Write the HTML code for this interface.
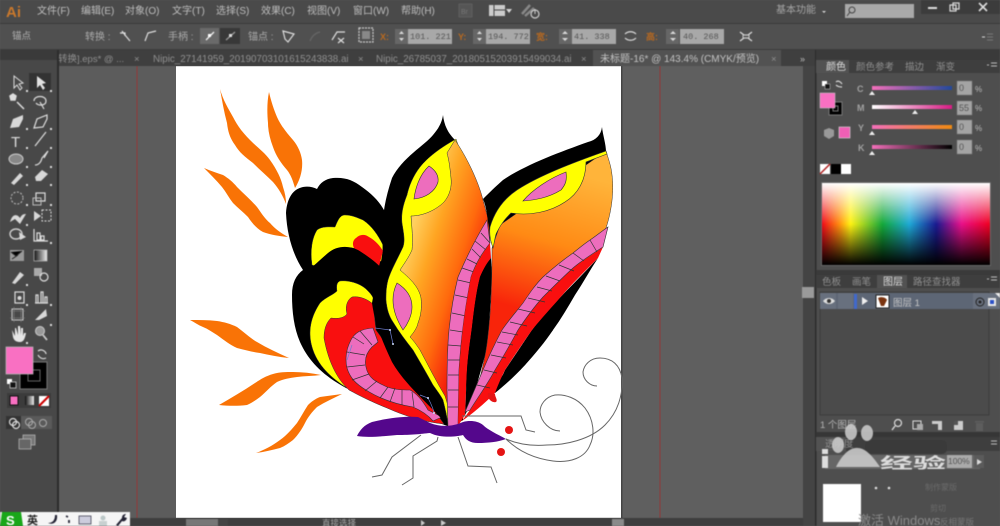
<!DOCTYPE html>
<html><head><meta charset="utf-8"><style>
html,body{margin:0;padding:0;width:1000px;height:526px;overflow:hidden;background:#535353}
svg{display:block}
text{font-family:"Liberation Sans","Noto Sans CJK SC",sans-serif}
.ui{filter:blur(.6px)}
.art{filter:blur(.25px)}
.m{font-size:10px;fill:#bdbdbd}
.t{font-size:10px;fill:#a8a8a8}
.d{font-size:9.5px;fill:#8f8f8f}
.v{font-size:8.5px;fill:#555;font-family:"Liberation Mono",monospace}
.o{font-size:9px;font-weight:bold;fill:#b9691f}
.i{fill:none;stroke:#ddd;stroke-width:1.2}
.f{fill:#d8d8d8}
</style></head><body>
<svg width="1000" height="526" viewBox="0 0 1000 526" xmlns="http://www.w3.org/2000/svg">
<defs>
<linearGradient id="lw" gradientUnits="userSpaceOnUse" x1="405" y1="250" x2="482" y2="275"><stop offset="0" stop-color="#ffd060"/><stop offset=".3" stop-color="#ffa522"/><stop offset=".68" stop-color="#ff6a0d"/><stop offset="1" stop-color="#f5200a"/></linearGradient>
<linearGradient id="rw" gradientUnits="userSpaceOnUse" x1="565" y1="170" x2="525" y2="310"><stop offset="0" stop-color="#ffb43a"/><stop offset=".5" stop-color="#ff8a14"/><stop offset="1" stop-color="#f8240a"/></linearGradient>
<linearGradient id="sp" x1="0" x2="1" y1="0" y2="0"><stop offset="0" stop-color="#f00a1a"/><stop offset=".1" stop-color="#ff8a10"/><stop offset=".17" stop-color="#fff212"/><stop offset=".36" stop-color="#14a83a"/><stop offset=".52" stop-color="#1ea9d6"/><stop offset=".68" stop-color="#1a1a90"/><stop offset=".83" stop-color="#e8108a"/><stop offset="1" stop-color="#f00020"/></linearGradient>
<linearGradient id="sw" x1="0" x2="0" y1="0" y2="1"><stop offset="0" stop-color="#fff"/><stop offset=".5" stop-color="#fff" stop-opacity="0"/></linearGradient>
<linearGradient id="sb" x1="0" x2="0" y1="0" y2="1"><stop offset=".5" stop-color="#000" stop-opacity="0"/><stop offset="1" stop-color="#000"/></linearGradient>
<linearGradient id="c1" x1="0" x2="1"><stop offset="0" stop-color="#f36fba"/><stop offset="1" stop-color="#22489a"/></linearGradient>
<linearGradient id="c2" x1="0" x2="1"><stop offset="0" stop-color="#fff"/><stop offset="1" stop-color="#d81b84"/></linearGradient>
<linearGradient id="c3" x1="0" x2="1"><stop offset="0" stop-color="#f36fba"/><stop offset="1" stop-color="#f08a10"/></linearGradient>
<linearGradient id="c4" x1="0" x2="1"><stop offset="0" stop-color="#f36fba"/><stop offset="1" stop-color="#000"/></linearGradient>
<linearGradient id="gb" x1="0" x2="1"><stop offset="0" stop-color="#111"/><stop offset="1" stop-color="#eee"/></linearGradient>
</defs>

<!-- canvas -->
<rect width="1000" height="526" fill="#5c5c5c"/>
<rect x="621" y="66" width="182" height="452" fill="#5f5f5f"/>
<rect x="136.500" y="66" width="1" height="452" fill="#8f3a3a"/>
<rect x="659.500" y="66" width="1" height="452" fill="#8f3a3a"/>

<!-- artboard -->
<rect x="176" y="66" width="445" height="452" fill="#fff"/>
<rect x="621" y="66" width="1.500" height="452" fill="#444"/>

<g class="art">
<!-- leaves -->
<g fill="#f97306">
<path d="M220 89C223 100 228 108 233 117C238 127 244 134 250 140C258 148 265 153 270 160C277 170 281 178 283 187C285 193 286 198 286 204C283 196 279 189 273 182C267 176 260 170 253 163C245 157 239 152 235 145C230 138 228 132 227 123C224 112 222 100 220 89Z"/>
<path d="M269 92C271 101 274 110 277 117C281 126 287 133 293 140C298 146 301 153 302 160C303 170 300 180 295 188C293 181 291 175 287 170C281 163 276 156 273 147C270 139 268 131 268 123C267 112 267 102 269 92Z"/>
<path d="M204 168C211 171 217 173 223 175C228 178 233 182 237 187C244 194 251 200 257 207C262 214 265 219 270 223C275 229 281 233 288 237C279 236 271 235 263 232C257 229 252 223 248 217C243 212 238 208 233 203C229 198 226 192 222 187C216 180 210 174 204 168Z"/>
<path d="M190 320C199 320 208 320 217 321C224 322 231 324 237 327C244 332 250 338 257 342C267 348 278 353 289 358C279 357 269 355 260 353C252 352 245 350 237 348C230 345 224 340 217 335C212 332 208 329 203 327C198 325 194 322 190 320Z"/>
<path d="M321 375C312 373 302 372 293 372C286 372 279 372 273 374C266 376 261 379 255 383C243 391 231 398 219 405C229 406 238 406 247 405C252 403 256 400 260 397C266 392 271 386 277 382C283 379 290 378 297 377C305 376 313 376 321 375Z"/>
<path d="M342 394C335 395 327 396 320 397C315 399 311 402 308 405C304 411 301 417 297 423C292 429 287 435 280 440C272 446 264 450 256 453C264 452 272 450 280 448C285 446 289 443 293 440C298 435 302 429 305 423C308 417 312 412 317 407C325 402 334 398 342 394Z"/>
</g>

<!-- upper left wing -->
<path d="M286 213C287 198 293 189 303 187C308 186 313 187 317 189C320 183 325 179 333 178C345 177 353 180 362 187C372 194 380 202 385 212L392 262L377 275L303 270C293 255 287 235 286 213Z" fill="#000"/>
<path d="M318 267L312 265C310 250 312 238 317 230C322 226 330 227 335 227C338 220 340 215 345 215C352 215 358 218 363 220C372 226 378 235 383 245L382 262L360 250C350 246 340 248 333 251C326 255 322 260 318 267Z" fill="#ff0" stroke="#333" stroke-width=".5"/>
<path d="M354 248C352 244 353 240 356 238C360 234 365 234 369 237C376 241 380 246 383 251L378 270C370 262 362 254 354 248Z" fill="#f90f0f"/>

<!-- lower left wing -->
<path d="M303 270C296 275 292 283 292 295C292 312 294 328 300 342C308 360 322 375 346 388L450 427L452 300L388 275C380 265 368 256 358 250C348 245 336 246 328 253C322 258 317 263 312 267Z" fill="#000"/>
<path d="M347 388C328 376 315 362 311 343C308 328 312 315 320 303C326 297 333 295 337 291C336 286 337 282 340 281C350 280 362 284 368 291C372 295 374 298 375 305L372 375L350 388Z" fill="#ff0" stroke="#333" stroke-width=".5"/>
<path d="M349 390C336 378 328 360 324 338C324 328 327 322 331 318C338 319 344 318 347 314C345 307 347 300 352 297C358 296 366 298 373 304L376 330L444 424C424 422 405 416 387 408C372 402 360 396 349 390Z" fill="#f90f0f" stroke="#333" stroke-width=".5"/>
<!-- ring band -->
<path d="M373 328C362 329 354 332 350 342C346 350 345 360 347 368C350 378 356 384 366 390C380 399 395 404 413 407C420 410 428 415 433 421L442 417L428 410C424 403 418 394 410 390C402 390 396 390 387 387C376 382 368 378 366 367C364 358 367 352 372 347L378 342Z" fill="#ed6dbd" stroke="#333" stroke-width=".6"/>
<g stroke="#333" stroke-width=".7" fill="none">
<path d="M353 337L364 344M347 352L365 355M347 367L365 365M352 380L369 374M365 391L377 381M380 398L388 387M390 402L395 388M402 405L402 390M414 407L412 392M360 331L372 345"/>
</g>

<!-- front left wing: black -->
<path d="M443 115C444 124 447 132 455 140L490 240L470 350L463 420L450 428C430 405 405 385 392 362C384 345 375 325 372 303C375 285 380 270 383 250C381 225 383 205 392 178C402 158 425 145 433 135C439 128 442 122 443 115Z" fill="#000"/>
<!-- yellow -->
<path d="M456 139C440 148 428 157 420 167C413 176 409 186 407 195C403 205 401 214 402 223C404 235 405 241 403 247C398 258 391 270 388 280C386 288 386 294 386 300C387 310 389 316 393 322C399 332 406 341 413 350C420 362 427 374 433 385C438 392 441 396 443 400C445 408 447 416 448 425L452 425L470 300L490 240Z" fill="#ff0" stroke="#333" stroke-width=".5"/>
<!-- orange -->
<path d="M455 140C466 156 478 180 483 200L489 222L490 243L474 290L464 340L458 425L451 425C450 414 448 405 445 396C436 381 428 365 420 350C416 344 413 340 410 337C414 332 417 328 418 323C421 315 422 308 421 298C419 288 412 280 400 270C404 264 409 257 412 250C413 240 412 228 411 216C423 216 436 210 444 202C450 195 452 186 451 178C450 168 449 160 447 153Z" fill="url(#lw)" stroke="#333" stroke-width=".5"/>
<path d="M429 166C435 170 439 175 438 182C435 192 425 198 414 199C415 190 419 175 429 166Z" fill="#ed6dbd" stroke="#333" stroke-width=".6"/>
<path d="M397 283C405 288 412 296 412 307C412 316 407 325 403 330C398 322 393 312 393 300C393 292 395 287 397 283Z" fill="#ed6dbd" stroke="#333" stroke-width=".6"/>

<!-- strips -->
<path d="M487 220C476 238 466 258 458 277C454 293 451 310 449 330C447 350 447 370 447 390L448 428L458 426L459 370C460 355 461 342 463 327C465 310 468 293 471 277C476 262 483 252 490 243Z" fill="#ed6dbd" stroke="#333" stroke-width=".6"/>
<g stroke="#333" stroke-width=".7" fill="none">
<path d="M481 233L490 243M475 241L486 250M472 249L481 258M467 259L477 264M462 268L474 272M458 280L471 283M455 295L469 298M452 313L466 316M450 330L463 332M448 345L461 346M448 360L460 360M448 375L459 375M448 390L459 390M448 407L458 407"/>
</g>
<path d="M490 243C484 252 476 264 471 277C468 293 465 310 463 327C461 345 460 360 459 370L458 426L465 415C466 400 466 385 467 370C468 355 470 342 472 327C474 310 476 293 480 277C483 270 488 262 491 258Z" fill="#f90f0f"/>
<path d="M491 258C486 264 483 270 480 277C476 293 474 310 472 327C470 342 468 355 467 370C466 385 466 400 465 415L472 402L488 345L492 277Z" fill="#000"/>

<!-- right wing -->
<path d="M602 127C601 135 596 140 588 142C560 152 525 165 503 180C495 187 489 193 483 199C486 206 487 214 488 222L491 240L606 152C606 144 603 136 602 127Z" fill="#000"/>
<path d="M492 248C492 280 491 310 488 335C486 355 482 370 478 385L470 402L520 340L606 228C612 210 614 190 612 175C611 165 608 158 606 151L500 225Z" fill="url(#rw)" stroke="#333" stroke-width=".5"/>
<path d="M606 151C575 162 540 175 517 190C505 198 495 210 490 227C489 236 491 242 493 248C495 240 495 235 497 232C502 222 507 217 511 213C530 216 550 212 565 202C578 194 586 180 586 162L607 154Z" fill="#ff0" stroke="#333" stroke-width=".6"/>
<path d="M566 172C567 180 566 184 561 190C548 198 535 200 523 201C532 190 550 178 566 172Z" fill="#ed6dbd" stroke="#333" stroke-width=".6"/>
<path d="M598 258C590 270 583 283 575 295C568 307 561 319 553 330C545 342 535 354 525 365C515 376 505 385 495 393C490 396 487 399 484 401L510 365C515 355 524 342 532 330C548 308 575 283 598 258Z" fill="#000"/>
<path d="M553 330L525 365L495 393L505 370L532 330Z" fill="#000"/>
<path d="M603 247C590 256 580 262 573 268C562 278 552 288 543 297C534 307 526 318 518 330C510 345 503 357 495 370C487 385 478 397 470 410L462 421C472 414 484 404 495 393C498 385 501 378 505 370C514 356 523 343 532 330C540 320 553 306 565 292C576 280 588 268 598 258Z" fill="#f90f0f"/>
<path d="M608 227C602 231 596 236 590 240C584 244 578 249 573 253C563 260 553 268 543 277C535 285 529 294 523 303C516 312 508 321 502 330C495 343 489 356 483 370C477 384 471 398 465 412L470 410C478 397 487 385 495 370C503 357 510 345 518 330C526 318 534 307 543 297C552 288 562 278 573 268C580 262 592 254 603 247Z" fill="#ed6dbd" stroke="#333" stroke-width=".6"/>
<g stroke="#333" stroke-width=".7" fill="none">
<path d="M590 240L597 252M573 253L584 261M559 265L574 271M546 276L560 281M537 287L552 291M528 298L545 302M518 309L535 313M510 322L527 326M502 332L518 335M497 342L513 345M491 355L506 358M484 370L497 373M477 385L490 388"/>
</g>
<path d="M488 393C487 400 493 403 496 402C498 400 495 397 495 394Z" fill="#e51414"/>

<!-- body -->
<path d="M357 436C360 430 364 425 372 422C388 418 405 416 418 417L430 423C440 427 452 427 463 422C470 420 478 421 483 425C488 430 497 434 506 439C498 442 488 443 478 443C470 443 466 440 463 435C456 437 440 438 430 433C420 434 412 435 397 435C385 436 368 438 357 436Z" fill="#54078c"/>
<circle cx="509" cy="430" r="4" fill="#e51414"/>
<circle cx="501" cy="452" r="4" fill="#e51414"/>

<!-- legs & antennae -->
<g fill="none" stroke="#666" stroke-width="1">
<path d="M421 435L392 457L382 475L372 477"/>
<path d="M438 437L437 441L413 456L413 478L402 485"/>
<path d="M458 437L468 466L491 467L497 483"/>
<path d="M462 416L521 416L526 430L535 432"/>
<path d="M506 439C520 445 535 446 547 445C565 445 590 440 605 425C618 412 623 395 622 378C620 365 612 358 600 358C590 358 584 365 583 372C583 380 590 386 597 386"/>
<path d="M506 439C515 448 530 458 553 461C570 463 585 458 590 445C595 435 594 420 585 408C577 398 565 394 555 395C545 397 540 405 540 412C541 422 550 431 560 431"/>
</g>
<!-- anchor path -->
<g fill="none" stroke="#6f7fd0" stroke-width=".7">
<path d="M375 328L390 330L393 344M347 360L352 345M420 395L428 398C432 405 434 412 434 413"/>
</g>
<g fill="#cfe0ff"><circle cx="390" cy="330" r="1"/><circle cx="393" cy="344" r="1"/><circle cx="428" cy="398" r="1"/><circle cx="434" cy="413" r="1"/></g>
</g>

<g class="ui">
<!-- title bar -->
<rect width="1000" height="24" fill="#4a4a4a"/>
<rect y="23" width="1000" height="1" fill="#3a3a3a"/>
<text x="6" y="17" font-size="15" font-weight="bold" fill="#c9782c">Ai</text>
<g class="m">
<text x="37" y="14">文件(F)</text><text x="81" y="14">编辑(E)</text><text x="125" y="14">对象(O)</text><text x="172" y="14">文字(T)</text><text x="216" y="14">选择(S)</text><text x="261" y="14">效果(C)</text><text x="307" y="14">视图(V)</text><text x="353" y="14">窗口(W)</text><text x="401" y="14">帮助(H)</text>
</g>
<rect x="459" y="4" width="13" height="13" fill="#555" stroke="#666" stroke-width=".7"/>
<text x="461" y="14" font-size="7" fill="#777">Br</text>
<rect x="489" y="5" width="16" height="11" fill="#ccc"/><path d="M494 5V16M494 10H505" stroke="#444" stroke-width="1"/>
<path d="M506 9L512 9L509 13Z" class="f"/>
<path d="M522 14L530 5M525 16L534 8" stroke="#888" stroke-width="2.500"/>
<circle cx="535" cy="14" r="4" fill="none" stroke="#ccc" stroke-width="1.200"/><path d="M535 9V14" stroke="#ccc"/>
<text x="776" y="13" font-size="10" fill="#a5a5a5">基本功能</text>
<path d="M822 11L826 11L824 13Z" class="f"/>
<rect x="845" y="4" width="69" height="14" fill="#a9a9a9"/>
<circle cx="852" cy="10" r="3" fill="none" stroke="#444"/><path d="M850 12L847 16" stroke="#444"/>
<rect x="921" y="0" width="79" height="14" fill="#3c3c3c"/>
<rect x="928" y="7" width="9" height="2" fill="#ddd"/>
<rect x="950" y="5" width="6" height="6" fill="none" stroke="#ddd" stroke-width="1.200"/><rect x="953" y="3" width="6" height="6" fill="none" stroke="#ddd" stroke-width="1.200"/>
<path d="M979 3L987 11M987 3L979 11" stroke="#ddd" stroke-width="1.600"/>

<!-- control bar -->
<rect y="24" width="1000" height="26" fill="#505050"/>
<rect y="49" width="1000" height="1" fill="#3c3c3c"/>
<text x="12" y="39" font-size="9.500" fill="#b0b0b0">锚点</text>
<text x="85" y="40" class="t">转换 :</text>
<path d="M122 31L125 35L130 41M120 33H125V36" class="i" stroke-width="1.600"/>
<path d="M145 41L148 33L156 31" class="i" stroke-width="1.600"/>
<text x="168" y="40" class="t">手柄 :</text>
<rect x="200" y="28" width="19" height="16" fill="#6a6a6a"/>
<rect x="220" y="28" width="20" height="16" fill="#383838"/>
<path d="M206 40L214 32" stroke="#eee" stroke-width="1.300"/><rect x="208" y="34" width="3" height="3" fill="#fff"/>
<path d="M226 40L235 32" stroke="#999" stroke-width="1.300"/><rect x="229" y="34" width="3" height="3" fill="#ddd"/>
<text x="248" y="40" class="t">锚点 :</text>
<path d="M283 31L294 34L288 42L285 39Z" class="i"/>
<path d="M310 41C312 36 315 33 320 32" fill="none" stroke="#666" stroke-width="1.200"/>
<path d="M332 40L337 32L345 32M338 38L344 43M344 38L338 43" class="i"/>
<rect x="359" y="28" width="14" height="14" fill="none" stroke="#ccc" stroke-width="1.200" stroke-dasharray="2 1"/>
<rect x="362" y="31" width="8" height="8" fill="#888"/>
<text x="380" y="40" class="o">X:</text>
<rect x="395" y="29" width="13" height="15" fill="#666"/>
<path d="M399 34L401.500 31L404 34ZM399 38L401.500 41L404 38Z" class="f"/>
<rect x="408" y="29" width="44" height="15" fill="#a8a8a8"/><text x="410" y="39" class="v">101. 221</text>
<text x="458" y="40" class="o">Y:</text>
<rect x="473" y="29" width="13" height="15" fill="#666"/>
<path d="M477 34L479.500 31L482 34ZM477 38L479.500 41L482 38Z" class="f"/>
<rect x="486" y="29" width="44" height="15" fill="#a8a8a8"/><text x="488" y="39" class="v">194. 772</text>
<text x="536" y="40" class="o">宽:</text>
<rect x="559" y="29" width="13" height="15" fill="#666"/>
<path d="M562 34L565 31L568 34ZM562 38L565 41L568 38Z" class="f"/>
<rect x="572" y="29" width="44" height="15" fill="#a8a8a8"/><text x="574" y="39" class="v">41. 338</text>
<path d="M625 34C628 31 633 31 636 34M625 38C628 41 633 41 636 38" class="i"/>
<text x="646" y="40" class="o">高:</text>
<rect x="666" y="29" width="13" height="15" fill="#666"/>
<path d="M670 34L673 31L676 34ZM670 38L673 41L676 38Z" class="f"/>
<rect x="680" y="29" width="44" height="15" fill="#a8a8a8"/><text x="683" y="39" class="v">40. 268</text>
<path d="M740 32L744 35H748L752 32M740 41L744 38H748L752 41" class="i"/><rect x="743" y="35" width="6" height="3" fill="none" stroke="#ccc"/>
<path d="M982 37L985 37" stroke="#ddd"/><path d="M987 34H993M987 37H993M987 40H993" stroke="#777"/>

<!-- tabs -->
<rect y="50" width="815" height="16" fill="#3f3f3f"/>
<rect x="593" y="50" width="188" height="16" fill="#525252"/>
<text x="58" y="62" class="d">转换].eps* @ ...</text>
<text x="134" y="62" class="d">×</text>
<text x="153" y="62" class="d" style="font-size:9.800px">Nipic_27141959_20190703101615243838.ai</text>
<text x="358" y="62" class="d">×</text>
<text x="376" y="62" class="d" style="font-size:9.800px">Nipic_26785037_20180515203915499034.ai</text>
<text x="581" y="62" class="d">×</text>
<text x="600" y="62" font-size="10" fill="#c2c2c2">未标题-16* @ 143.4% (CMYK/预览)</text>
<text x="771" y="62" class="d">×</text>
<text x="800" y="62" font-size="9" fill="#bbb">»</text>

<!-- toolbar -->
<rect y="50" width="58" height="476" fill="#484848"/>
<rect x="57" y="50" width="2" height="476" fill="#2c2c2c"/>
<rect x="0" y="50" width="57" height="10" fill="#3a3a3a"/>
<rect x="29" y="73" width="22" height="18" fill="#333"/>
<g>
<path d="M14 76V88L17 85L20 90L22 88L19 84L23 83Z" fill="none" stroke="#ddd"/>
<path d="M37 76V88L40 85L43 90L45 88L42 84L46 83Z" fill="#e2e2e2"/>
<path d="M10 96L13 94L16 96L15 100L11 100ZM17 102L24 109" fill="#ddd" stroke="#ddd" stroke-width="1.500"/>
<path d="M34 101C34 95 46 95 46 101C46 106 38 106 36 103M40 102L44 109" class="i" stroke-width="1.500"/>
<path d="M10 128L13 119L23 115L23 119L19 127Z" class="f"/><path d="M34 128L37 119L47 115L47 119L43 127Z" class="i"/>
<text x="11" y="147" font-size="15" fill="#ddd" font-family="Liberation Serif">T</text>
<path d="M35 146L46 132" stroke="#ddd" stroke-width="1.200"/>
<ellipse cx="16" cy="159" rx="7" ry="5" fill="#888" stroke="#ccc"/>
<path d="M35 165C39 165 41 162 42 158L48 151L44 158" class="i" stroke-width="1.600"/>
<path d="M11 183L20 173L23 176L14 185Z" class="f"/>
<path d="M35 177L42 170L48 174L41 181L36 181Z" class="f"/>
<circle cx="17" cy="198" r="6" fill="none" stroke="#bbb" stroke-dasharray="2 1.500"/>
<rect x="36" y="193" width="9" height="8" class="i"/><rect x="33" y="198" width="8" height="7" fill="none" stroke="#bbb"/>
<path d="M10 222C13 212 18 215 20 218C22 214 24 214 26 214L20 224L15 219Z" class="f"/>
<path d="M34 211L41 216L34 221Z" class="f"/><rect x="42" y="210" width="9" height="11" fill="none" stroke="#ddd" stroke-dasharray="2 1.500"/>
<ellipse cx="16" cy="234" rx="6" ry="5" fill="none" stroke="#ccc" stroke-width="1.400"/><path d="M19 232L26 237L20 240Z" class="f"/>
<path d="M34 229V241H48M37 240V233H40V240ZM41 240V236H44V240Z" class="i"/>
<rect x="10" y="250" width="14" height="11" fill="#999"/><path d="M11 252L16 256L22 251M12 259L18 255" stroke="#222"/>
<rect x="34" y="250" width="13" height="11" fill="url(#gb)" stroke="#bbb" stroke-width=".7"/>
<path d="M12 283L20 272L24 275L15 284Z" class="f"/>
<rect x="34" y="268" width="8" height="8" fill="#aaa"/><circle cx="44" cy="277" r="4" class="i"/>
<rect x="15" y="292" width="9" height="11" class="i"/><circle cx="19.500" cy="298" r="2" class="f"/>
<path d="M35 303H48M36 303V295H38V303M41 303V292H43V303M45 303V297H47V303" class="i"/>
<rect x="12" y="309" width="11" height="11" fill="none" stroke="#ccc"/><path d="M10 311H25M10 318H25M14 307V322M21 307V322" stroke="#888" stroke-width=".6"/>
<path d="M35 320L46 309L47 316L39 320Z" class="f"/>
<path d="M12 330L13 337C14 341 17 342 20 342C24 342 25 338 26 333L24 333L23 336V328L21 328V335L20 326H18V335L16 328H15L15 336Z" fill="#e6e6e6"/>
<circle cx="40" cy="331" r="4.500" fill="#999" stroke="#ccc"/><path d="M43 335L47 340" stroke="#ccc" stroke-width="1.800"/>
</g>
<g fill="#ddd"><path d="M26 90h2v2h-2zM50 90h2v2h-2zM26 128h2v2h-2zM50 128h2v2h-2zM26 147h2v2h-2zM50 147h2v2h-2zM26 166h2v2h-2zM50 166h2v2h-2zM26 184h2v2h-2zM50 184h2v2h-2zM26 204h2v2h-2zM50 204h2v2h-2zM26 224h2v2h-2zM50 242h2v2h-2zM26 284h2v2h-2zM26 304h2v2h-2zM50 304h2v2h-2zM50 324h2v2h-2zM26 342h2v2h-2z"/></g>

<!-- fill/stroke -->
<rect x="20" y="362" width="27" height="27" fill="#000" stroke="#777" stroke-width="1"/>
<rect x="28" y="370" width="12" height="11" fill="none" stroke="#666"/>
<rect x="6" y="347" width="27" height="27" fill="#f970c2" stroke="#bbb" stroke-width=".7"/>
<path d="M38 351C42 348 46 352 46 354M46 358C42 360 39 357 38 355" class="i"/>
<rect x="7" y="379" width="5" height="5" fill="#fff"/><rect x="10" y="382" width="6" height="6" fill="#111" stroke="#ddd" stroke-width=".7"/>
<rect x="7" y="393" width="44" height="15" fill="#3b3b3b"/>
<rect x="10" y="396" width="8" height="9" fill="#f970c2" stroke="#111"/>
<rect x="25" y="396" width="9" height="9" fill="url(#gb)"/>
<rect x="39" y="396" width="10" height="10" fill="#fff"/><path d="M39 406L49 396" stroke="#c00" stroke-width="2"/>
<rect x="6" y="416" width="46" height="13" fill="#5a5a5a"/><rect x="6" y="416" width="15" height="13" fill="#333"/>
<circle cx="13" cy="422" r="3.500" class="i"/><circle cx="16" cy="425" r="3.500" class="i"/>
<circle cx="29" cy="422" r="3.500" fill="none" stroke="#aaa"/><circle cx="32" cy="425" r="3.500" fill="none" stroke="#aaa"/>
<circle cx="43" cy="423" r="3.500" fill="none" stroke="#aaa"/>
<rect x="23" y="435" width="12" height="10" fill="#777" stroke="#bbb" stroke-width=".7"/>
<rect x="19" y="439" width="12" height="10" fill="#666" stroke="#bbb" stroke-width=".7"/>

<!-- scroll bar -->
<rect x="803" y="66" width="12" height="460" fill="#444"/>
<rect x="802" y="287" width="12" height="11" fill="#9a9a9a"/>

<!-- right panel -->
<rect x="815" y="50" width="185" height="476" fill="#4e4e4e"/>
<rect x="815" y="50" width="1.500" height="476" fill="#2c2c2c"/>
<rect x="816" y="50" width="184" height="10" fill="#3a3a3a"/>
<rect x="816" y="60" width="184" height="13" fill="#3e3e3e"/>
<rect x="816" y="60" width="33" height="13" fill="#525252"/>
<text x="826" y="70" font-size="10" fill="#ddd">颜色</text>
<text x="856" y="70" class="d">颜色参考</text><text x="905" y="70" class="d">描边</text><text x="936" y="70" class="d">渐变</text>
<path d="M987 65H989M991 63H997M991 66H997" stroke="#bbb"/>
<rect x="829" y="102" width="13" height="13" fill="#000" stroke="#777"/><rect x="833" y="106" width="5" height="5" fill="none" stroke="#777"/>
<rect x="820" y="93" width="15" height="15" fill="#f970c2" stroke="#ccc" stroke-width=".5"/>
<rect x="822" y="81" width="5" height="5" fill="#fff"/><rect x="825" y="84" width="5" height="5" fill="#111" stroke="#ccc" stroke-width=".5"/>
<path d="M836 82C838 80 841 82 842 84M842 87C839 87 837 86 836 85" class="i"/>
<path d="M829 128L834 130V136L829 139L824 136V130Z" fill="#999"/>
<rect x="839" y="127" width="11" height="11" fill="#f05fb5" stroke="#ddd" stroke-width=".6"/>
<g font-size="9" fill="#a0a0a0" font-weight="bold"><text x="857" y="92">C</text><text x="857" y="111">M</text><text x="858" y="131">Y</text><text x="858" y="151">K</text></g>
<rect x="872" y="86" width="80" height="4" fill="url(#c1)"/>
<rect x="872" y="105" width="80" height="4" fill="url(#c2)"/>
<rect x="872" y="125" width="80" height="4" fill="url(#c3)"/>
<rect x="872" y="145" width="80" height="4" fill="url(#c4)"/>
<g fill="#eee"><path d="M869 95L872 91L875 95ZM912 114L915 110L918 114ZM869 135L872 131L875 135ZM869 155L872 151L875 155Z"/></g>
<g fill="#a4a4a4" stroke="#777" stroke-width=".5"><rect x="957" y="81" width="15" height="14"/><rect x="957" y="101" width="15" height="14"/><rect x="957" y="120" width="15" height="14"/><rect x="957" y="140" width="15" height="14"/></g>
<g font-size="9" fill="#555" font-family="Liberation Mono"><text x="959" y="91">0</text><text x="959" y="111">55</text><text x="959" y="130">0</text><text x="959" y="150">0</text></g>
<g font-size="8" fill="#bbb"><text x="975" y="92">%</text><text x="975" y="111">%</text><text x="975" y="131">%</text><text x="975" y="151">%</text></g>
<rect x="820" y="164" width="10" height="10" fill="#fff"/><path d="M820 174L830 164" stroke="#b02020" stroke-width="1.500"/>
<rect x="831" y="164" width="10" height="10" fill="#000"/><rect x="841" y="164" width="10" height="10" fill="#fff"/>
<rect x="821" y="182" width="170" height="84" fill="#666"/>
<rect x="822" y="183" width="168" height="82" fill="url(#sp)"/>
<rect x="822" y="183" width="168" height="82" fill="url(#sw)"/>
<rect x="822" y="183" width="168" height="82" fill="url(#sb)"/>

<rect x="816" y="270" width="184" height="5" fill="#3a3a3a"/>
<rect x="816" y="275" width="184" height="13" fill="#3e3e3e"/>
<rect x="877" y="275" width="30" height="13" fill="#525252"/>
<text x="822" y="285" class="d">色板</text><text x="852" y="285" class="d">画笔</text><text x="883" y="285" font-size="10" fill="#ddd">图层</text><text x="913" y="285" class="d">路径查找器</text>
<path d="M991 277H997M991 280H997M987 279H989" stroke="#bbb"/>
<rect x="820" y="292" width="169" height="123" fill="#4b4b4b" stroke="#3c3c3c"/>
<rect x="820" y="293" width="180" height="16" fill="#5d6675"/>
<path d="M820 293H836V309H820ZM838 293H853V309H838ZM973 293H1000V309H973Z" fill="#68707e"/>
<rect x="854" y="294" width="3" height="15" fill="#4169cc"/>
<path d="M823 301C826 297 832 297 835 301C832 305 826 305 823 301Z" fill="#ddd"/><circle cx="829" cy="301" r="2" fill="#333"/>
<path d="M862 297L868 301L862 305Z" fill="#eee"/>
<rect x="876" y="295" width="13" height="13" fill="#fff" stroke="#222"/>
<path d="M878 298C882 296 886 298 887 300L884 306H881Z" fill="#7a3410"/>
<text x="893" y="306" font-size="9.500" fill="#c6c6c6">图层 1</text>
<circle cx="980" cy="302" r="4" fill="none" stroke="#222"/><circle cx="980" cy="302" r="1.500" fill="#222"/>
<rect x="988" y="298" width="8" height="8" fill="#e8e8e8"/><rect x="990" y="300" width="4" height="4" fill="#2a50c8"/>
<path d="M995 293H1000V298Z" fill="#eee"/>
<text x="820" y="428" font-size="9.500" fill="#b5b5b5">1 个图层</text>
<circle cx="898" cy="423" r="3.500" fill="none" stroke="#ddd" stroke-width="1.200"/><path d="M895 426L892 430" stroke="#ddd" stroke-width="1.300"/>
<rect x="913" y="421" width="8" height="8" fill="none" stroke="#ddd"/><rect x="917" y="424" width="6" height="6" fill="#aaa"/>
<path d="M932 421H942V430H938V424H932Z" fill="#ccc"/>
<rect x="954" y="421" width="9" height="9" fill="#ccc"/><rect x="954" y="421" width="4" height="4" fill="#555"/>
<rect x="976" y="423" width="7" height="8" fill="#5d5d5d"/><rect x="975" y="421" width="9" height="1.500" fill="#5d5d5d"/>

<rect x="816" y="432" width="184" height="5" fill="#363636"/>
<rect x="816" y="437" width="184" height="14" fill="#3e3e3e"/>
<rect x="816" y="437" width="30" height="14" fill="#525252"/>
<text x="825" y="447" class="d">透明度</text>
<rect x="865" y="440" width="82" height="14" rx="5" fill="#3a3a3a"/>
<rect x="825" y="455" width="155" height="14" fill="#666"/>
<rect x="947" y="455" width="25" height="13" fill="#aaa"/>
<text x="948" y="464" font-size="8.500" fill="#555">100%</text>
<rect x="974" y="455" width="10" height="13" fill="#5b5b5b"/><path d="M977 459L982 462L977 465Z" class="f"/>
<path d="M991 441H997M991 444H997" stroke="#bbb"/>
<rect x="823" y="484" width="38" height="38" fill="#fff"/>
<circle cx="876" cy="488" r="1.300" fill="#ddd"/><circle cx="889" cy="488" r="1.300" fill="#ddd"/>
<text x="925" y="490" font-size="8" fill="#6b6b6b">制作蒙版</text>
<text x="930" y="511" font-size="8" fill="#6b6b6b">剪切</text>
<text x="858" y="525" font-size="13" fill="#8a8a8a">激活 Windows</text>
<text x="940" y="525" font-size="8.500" fill="#777">反相蒙版</text>

<!-- status bar -->
<rect x="130" y="518" width="673" height="8" fill="#3e3e3e"/>
<rect x="186" y="519" width="32" height="7" fill="#777"/>
<rect x="218" y="519" width="10" height="7" fill="#444"/>
<text x="322" y="526" font-size="8.500" fill="#aaa">直接选择</text>
<rect x="612" y="519" width="12" height="7" fill="#8a8a8a"/>
<path d="M421 520L425 523L421 526ZM446 523L441 526V520Z" fill="#ccc"/>

<!-- IME bar -->
<rect x="0" y="512" width="130" height="14" fill="#f5f5f5"/>
<path d="M2 512H21L23 526H0Z" fill="#19a719"/>
<text x="6" y="525" font-size="13" font-weight="bold" fill="#fff">S</text>
<text x="27" y="524" font-size="11" font-weight="bold" fill="#222">英</text>
<path d="M55 515C55 521 52 523 48 523C52 525 58 523 57 515Z" fill="#223"/>
<path d="M66 516L68 517M69 520L69 523" stroke="#223" stroke-width="1.800"/>
<rect x="79" y="516" width="12" height="8" fill="#ccd" stroke="#445" stroke-width=".8"/>
<circle cx="103" cy="518" r="2.500" fill="#bcc8c8"/><rect x="99" y="521" width="8" height="5" fill="#c8d0d0"/>
<path d="M116 525L122 518C122 515 124 514 126 514L124 517L127 518C126 521 124 522 122 521L118 526Z" fill="#223"/>

<!-- watermark -->
<g fill="#cfcfcf" opacity=".85">
<ellipse cx="851" cy="432" rx="6" ry="8"/><ellipse cx="867" cy="433" rx="6" ry="8"/><ellipse cx="838" cy="445" rx="6" ry="8"/>
<path d="M836 467C842 455 850 447 858 448C866 448 874 458 880 467Z"/>
</g>
<rect x="822" y="449" width="6" height="5" fill="#ddd"/>
<rect x="822" y="456" width="6" height="12" fill="#ddd"/>
<text x="880" y="468" font-size="15" font-weight="bold" fill="#dcdcdc" textLength="66" lengthAdjust="spacingAndGlyphs">经验</text>
</g>
</svg>
</body></html>
